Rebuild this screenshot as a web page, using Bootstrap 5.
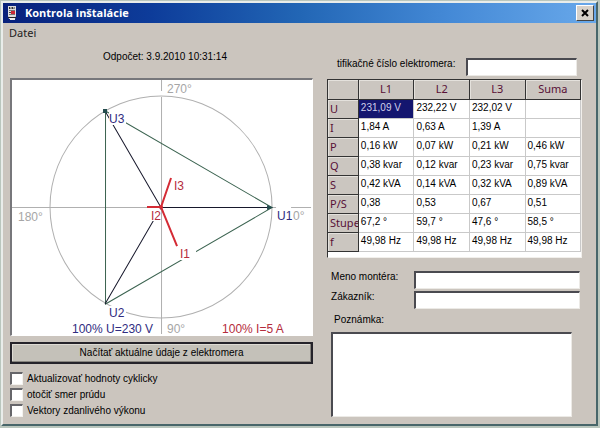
<!DOCTYPE html>
<html lang="sk">
<head>
<meta charset="utf-8">
<meta name="viewport" content="width=device-width, initial-scale=1">
<title>Kontrola inštalácie</title>
<link href="https://cdn.jsdelivr.net/npm/bootstrap@5.3.0/dist/css/bootstrap.min.css" rel="stylesheet">
<style>
body { background: #b9c6bd; font: 10px/12px "Liberation Sans", Arial, sans-serif; color: #000; }
.dialog-window { min-height: 100vh; padding: 1px 2px 2px 1px; }
.dialog-frame { background: #cbc5be; border: 2px solid #e9edea; border-right-color: #48666a; border-bottom-color: #48666a; }
.title-strip { height: 20px; background: linear-gradient(90deg, #08217b 0%, #0d3c9a 25%, #2266b5 50%, #4489d6 75%, #68a8ea 100%); padding: 0 2px 0 4px; }
.title-strip h1 { font: bold 11px/20px "Open Sans", "Noto Sans", sans-serif; color: #fff; }
.close-key { width: 18px; height: 16px; background: #d6d1c9; border: 1px solid #fff; border-right-color: #444; border-bottom-color: #444; border-radius: 0; }
.menu-strip { padding: 3px 6px; height: 20px; }
.menu-strip a { font: 11px/14px "Noto Sans", sans-serif; color: #222; }
.work-area { display: grid; grid-template-columns: minmax(0, 302fr) minmax(0, 264fr); column-gap: 14px; padding: 0 4px 6px 7px; }
.reading-time { height: 35px; padding: 8px 0 0 93px; }
.vector-panel { background: #fff; border: 1px solid #fff; border-top: 2px solid #77777b; border-left: 2px solid #77777b; }
.vector-panel svg { display: block; width: 100%; height: auto; }
.vector-panel text { font-family: "Liberation Sans", Arial, sans-serif; font-size: 12px; }
.load-key { height: 22px; margin-top: 6px; border: 2px solid #25232a; border-radius: 0; background: #c4c1b9; color: #000; font-size: 10px; line-height: 12px; box-shadow: inset -1px -1px #88857f, inset 1px 1px #dedbd4; }
.options { padding-top: 8px; row-gap: 3px; }
.options .form-check-input { width: 13px; height: 13px; margin: 0; border: 1px solid #f4f2ee; border-top: 2px solid #66666a; border-left: 2px solid #66666a; border-radius: 0; background-color: #fff; }
.options label { line-height: 13px; }
.sunken-box { background: #fff; border: 1px solid #eceae6; border-top: 2px solid #4a4a50; border-left: 2px solid #4a4a50; border-radius: 0; padding: 0 3px; font-size: 10px; line-height: 12px; min-height: 0; height: 18px; }
.meter-row { height: 36px; padding: 15px 15px 0 10px; column-gap: 6px; }
.meter-row label { white-space: nowrap; }
.meter-row .sunken-box { width: 111px; }
.grid-holder { width: 255px; max-width: 100%; background: #fff; border: 1px solid #f1efeb; border-top: 1px solid #333; border-left: 1px solid #333; padding-bottom: 5px; }
.readings { width: 100%; table-layout: fixed; border-collapse: collapse; }
.readings th, .readings td { height: 19px; padding: 0 2px; overflow: hidden; white-space: nowrap; line-height: 14px; }
.readings td { border-right: 1px solid #c9c9c9; border-bottom: 1px solid #c9c9c9; vertical-align: top; padding-top: 1px; }
.readings th { background: #cbc6c0; border-right: 1px solid #333; border-bottom: 1px solid #333; font: 11px/14px "Noto Sans", sans-serif; color: #581036; box-shadow: inset 1px 1px #e4e1dc; }
.readings td.chosen { background: #14166f; color: #d0d0ec; }
.details { padding: 13px 8px 0 4px; }
.detail-row { height: 20px; }
.detail-row label { width: 83px; }
.detail-row .sunken-box { width: 166px; }
.note-label { padding: 3px 0 6px 3px; }
.note-box { width: 241px; max-width: 100%; height: 85px; resize: none; }
.axis { stroke: #b0b0b0; }
.volt { stroke: #17182c; }
.delta { stroke: #3b6350; }
.amp { stroke: #d42b35; stroke-width: 2; }
.axis-name { fill: #a6a6a6; }
.volt-name { fill: #302c80; }
.amp-name { fill: #b52c3c; }
</style>
<script src="https://cdn.jsdelivr.net/npm/bootstrap@5.3.0/dist/js/bootstrap.bundle.min.js"></script>
</head>
<body>
<div class="dialog-window d-flex flex-column">
<div class="dialog-frame flex-grow-1">
  <header class="title-strip d-flex align-items-center">
    <svg width="10" height="16" viewBox="0 0 10 16" aria-hidden="true">
      <path d="M1 1h8v10L8 14H2L1 11z" fill="#ddd"/><path d="M2 2h6v2H2z" fill="#333"/><path d="M3 2h1v2M6 2h1v2" stroke="#ddd" fill="none"/>
      <path d="M2 5h6v1H2zM2 9h6v1H2z" fill="#777"/><path d="M2 7h2v1H2z" fill="#444"/><path d="M4 6h4v3H4z" fill="#cc2936"/><path d="M1 12h8v1H1z" fill="#222"/><path d="M3 13h5v2H3z" fill="#eee"/>
    </svg>
    <h1 class="m-0 ms-2 flex-grow-1">Kontrola inštalácie</h1>
    <button type="button" class="close-key p-0 d-flex align-items-center justify-content-center" aria-label="Zavrieť">
      <svg width="8" height="8" viewBox="0 0 8 8"><path d="M1 1l6 6M7 1L1 7" stroke="#000" stroke-width="2"/></svg>
    </button>
  </header>
  <nav class="menu-strip"><a href="#" class="text-decoration-none d-block">Datei</a></nav>
  <main class="work-area">
    <section>
      <div class="reading-time">Odpočet: 3.9.2010 10:31:14</div>
      <div class="vector-panel">
        <svg viewBox="0 0 300 255" role="img" aria-label="Vektorový diagram" fill="none">
          <path class="axis" d="M149.500 0V11M149.500 17V254M0 127.500H299"/>
          <circle class="axis" cx="149" cy="127" r="111"/>
          <path class="delta" d="M93.500 31V224L260 127.500L93.500 31"/>
          <path class="volt" d="M93 31L149 127.500L93 224M149 127.500H260"/>
          <path d="M91 29h4v4h-4zM255 125l6 2.500-6 2.500z" fill="#244c4e"/>
          <path d="M97 31h17v14H97zM97 226h17v14H97zM167 166h17v14h-17zM264 126h15v14h-15zM139 129h9v12h-9z" fill="#fff"/>
          <path class="amp" d="M135 127H149L159 98M149 127L165 166"/>
          <circle cx="149" cy="127" r="2" fill="#d42b35"/>
          <text class="axis-name" x="155" y="13">270°</text>
          <text class="axis-name" x="6" y="141">180°</text>
          <text class="axis-name" x="155" y="253">90°</text>
          <text class="axis-name" x="281" y="140">0°</text>
          <text class="volt-name" x="97" y="43">U3</text>
          <text class="volt-name" x="265" y="140">U1</text>
          <text class="volt-name" x="97" y="237">U2</text>
          <text class="volt-name" x="60" y="253">100% U=230 V</text>
          <text class="amp-name" x="162" y="110">I3</text>
          <text class="amp-name" x="139" y="140">I2</text>
          <text class="amp-name" x="168" y="178">I1</text>
          <text class="amp-name" x="210" y="253">100% I=5 A</text>
        </svg>
      </div>
      <button type="button" class="load-key w-100 p-0">Načítať aktuálne údaje z elektromera</button>
      <div class="options d-flex flex-column">
        <div class="d-flex gap-1"><input class="form-check-input" type="checkbox" id="cyclic"><label for="cyclic">Aktualizovať hodnoty cyklicky</label></div>
        <div class="d-flex gap-1"><input class="form-check-input" type="checkbox" id="flip"><label for="flip">otočiť smer prúdu</label></div>
        <div class="d-flex gap-1"><input class="form-check-input" type="checkbox" id="power"><label for="power">Vektory zdanlivého výkonu</label></div>
      </div>
    </section>
    <section>
      <div class="meter-row d-flex">
        <label for="meter">tifikačné číslo elektromera:</label>
        <input type="text" id="meter" class="form-control sunken-box ms-auto">
      </div>
      <div class="grid-holder">
        <table class="readings">
          <colgroup><col style="width:12%"><col style="width:22%"><col style="width:22%"><col style="width:22%"><col style="width:22%"></colgroup>
          <thead><tr class="text-center"><th></th><th scope="col">L1</th><th scope="col">L2</th><th scope="col">L3</th><th scope="col">Suma</th></tr></thead>
          <tbody>
            <tr><th scope="row">U</th><td class="chosen">231,09 V</td><td>232,22 V</td><td>232,02 V</td><td></td></tr>
            <tr><th scope="row">I</th><td>1,84 A</td><td>0,63 A</td><td>1,39 A</td><td></td></tr>
            <tr><th scope="row">P</th><td>0,16 kW</td><td>0,07 kW</td><td>0,21 kW</td><td>0,46 kW</td></tr>
            <tr><th scope="row">Q</th><td>0,38 kvar</td><td>0,12 kvar</td><td>0,23 kvar</td><td>0,75 kvar</td></tr>
            <tr><th scope="row">S</th><td>0,42 kVA</td><td>0,14 kVA</td><td>0,32 kVA</td><td>0,89 kVA</td></tr>
            <tr><th scope="row">P/S</th><td>0,38</td><td>0,53</td><td>0,67</td><td>0,51</td></tr>
            <tr><th scope="row">Stupe</th><td>67,2 °</td><td>59,7 °</td><td>47,6 °</td><td>58,5 °</td></tr>
            <tr><th scope="row">f</th><td>49,98 Hz</td><td>49,98 Hz</td><td>49,98 Hz</td><td>49,98 Hz</td></tr>
          </tbody>
        </table>
      </div>
      <div class="details">
        <div class="detail-row d-flex"><label for="fitter">Meno montéra:</label><input type="text" id="fitter" class="form-control sunken-box"></div>
        <div class="detail-row d-flex"><label for="client">Zákazník:</label><input type="text" id="client" class="form-control sunken-box"></div>
        <label for="note" class="note-label d-block">Poznámka:</label>
        <textarea id="note" class="form-control sunken-box note-box"></textarea>
      </div>
    </section>
  </main>
</div>
</div>
</body>
</html>
